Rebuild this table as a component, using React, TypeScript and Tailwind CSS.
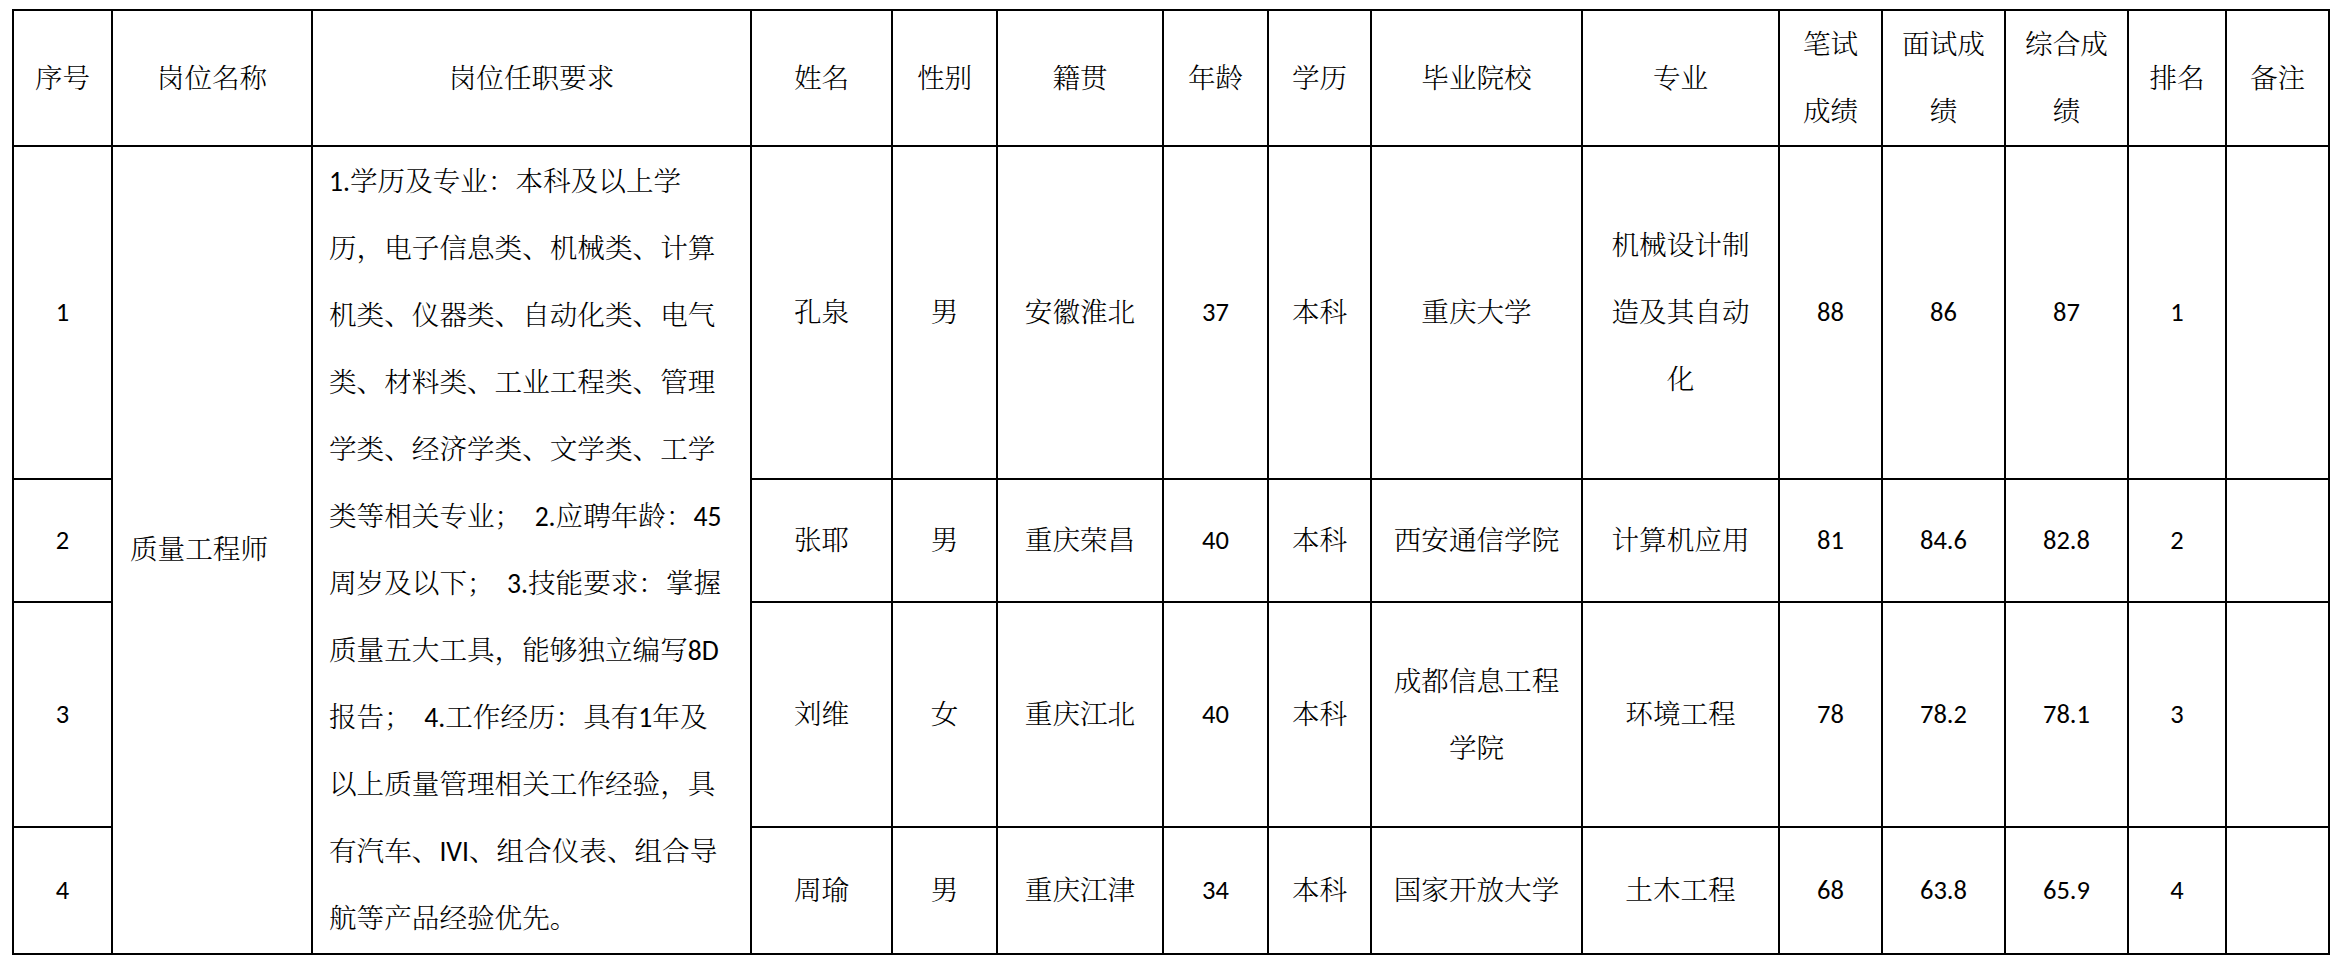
const FONT = "font-['Carlito','Lato','Noto_Serif_CJK_SC','Noto_Sans_CJK_SC',serif]";

const headers: { label: string[]; w: string }[] = [
  { label: ["序号"], w: "w-[99px]" },
  { label: ["岗位名称"], w: "w-[200px]" },
  { label: ["岗位任职要求"], w: "w-[439px]" },
  { label: ["姓名"], w: "w-[141px]" },
  { label: ["性别"], w: "w-[105px]" },
  { label: ["籍贯"], w: "w-[166px]" },
  { label: ["年龄"], w: "w-[105px]" },
  { label: ["学历"], w: "w-[103px]" },
  { label: ["毕业院校"], w: "w-[211px]" },
  { label: ["专业"], w: "w-[197px]" },
  { label: ["笔试", "成绩"], w: "w-[103px]" },
  { label: ["面试成", "绩"], w: "w-[123px]" },
  { label: ["综合成", "绩"], w: "w-[123px]" },
  { label: ["排名"], w: "w-[98px]" },
  { label: ["备注"], w: "w-[103px]" },
];

// job requirement text, broken exactly where the source document wraps
const requirement = [
  "1.学历及专业：本科及以上学",
  "历，电子信息类、机械类、计算",
  "机类、仪器类、自动化类、电气",
  "类、材料类、工业工程类、管理",
  "学类、经济学类、文学类、工学",
  "类等相关专业；  2.应聘年龄：45",
  "周岁及以下；  3.技能要求：掌握",
  "质量五大工具，能够独立编写8D",
  "报告；  4.工作经历：具有1年及",
  "以上质量管理相关工作经验，具",
  "有汽车、IVI、组合仪表、组合导",
  "航等产品经验优先。",
];

type Candidate = {
  no: string;
  name: string;
  gender: string;
  origin: string;
  age: string;
  edu: string;
  school: string[];
  major: string[];
  written: string;
  interview: string;
  total: string;
  rank: string;
  h: string;
};

const candidates: Candidate[] = [
  {
    no: "1", name: "孔泉", gender: "男", origin: "安徽淮北", age: "37", edu: "本科",
    school: ["重庆大学"], major: ["机械设计制", "造及其自动", "化"],
    written: "88", interview: "86", total: "87", rank: "1", h: "h-[333px]",
  },
  {
    no: "2", name: "张耶", gender: "男", origin: "重庆荣昌", age: "40", edu: "本科",
    school: ["西安通信学院"], major: ["计算机应用"],
    written: "81", interview: "84.6", total: "82.8", rank: "2", h: "h-[123px]",
  },
  {
    no: "3", name: "刘维", gender: "女", origin: "重庆江北", age: "40", edu: "本科",
    school: ["成都信息工程", "学院"], major: ["环境工程"],
    written: "78", interview: "78.2", total: "78.1", rank: "3", h: "h-[225px]",
  },
  {
    no: "4", name: "周瑜", gender: "男", origin: "重庆江津", age: "34", edu: "本科",
    school: ["国家开放大学"], major: ["土木工程"],
    written: "68", interview: "63.8", total: "65.9", rank: "4", h: "h-[127px]",
  },
];

const td = "border-2 border-black p-0 align-middle text-center";
const num = `${td} text-[26.5px] font-normal`;

function Lines({ lines }: { lines: string[] }) {
  return (
    <div className="leading-[67px]">
      {lines.map((l, i) => (
        <div key={i} className="whitespace-pre">
          {l}
        </div>
      ))}
    </div>
  );
}

export default function App() {
  return (
    <div className={`min-h-screen bg-white pl-[12px] pt-[9px] text-[27.6px] font-light text-black ${FONT}`}>
      <table className="w-[2318px] table-fixed border-collapse">
        <colgroup>
          {headers.map((h, i) => (
            <col key={i} className={h.w} />
          ))}
        </colgroup>
        <thead>
          <tr className="h-[136px]">
            {headers.map((h, i) => (
              <th key={i} className={`${td} font-light`}>
                <Lines lines={h.label} />
              </th>
            ))}
          </tr>
        </thead>
        <tbody>
          {candidates.map((c, idx) => (
            <tr key={c.no} className={c.h}>
              <td className={num}>{c.no}</td>
              {idx === 0 && (
                <>
                  <td rowSpan={4} className={`${td} !text-left pl-[17px]`}>
                    质量工程师
                  </td>
                  <td rowSpan={4} className={`${td} !text-left pl-[16px]`}>
                    <Lines lines={requirement} />
                  </td>
                </>
              )}
              <td className={td}>{c.name}</td>
              <td className={td}>{c.gender}</td>
              <td className={td}>{c.origin}</td>
              <td className={num}>{c.age}</td>
              <td className={td}>{c.edu}</td>
              <td className={td}>
                <Lines lines={c.school} />
              </td>
              <td className={td}>
                <Lines lines={c.major} />
              </td>
              <td className={num}>{c.written}</td>
              <td className={num}>{c.interview}</td>
              <td className={num}>{c.total}</td>
              <td className={num}>{c.rank}</td>
              <td className={td}></td>
            </tr>
          ))}
        </tbody>
      </table>
    </div>
  );
}
